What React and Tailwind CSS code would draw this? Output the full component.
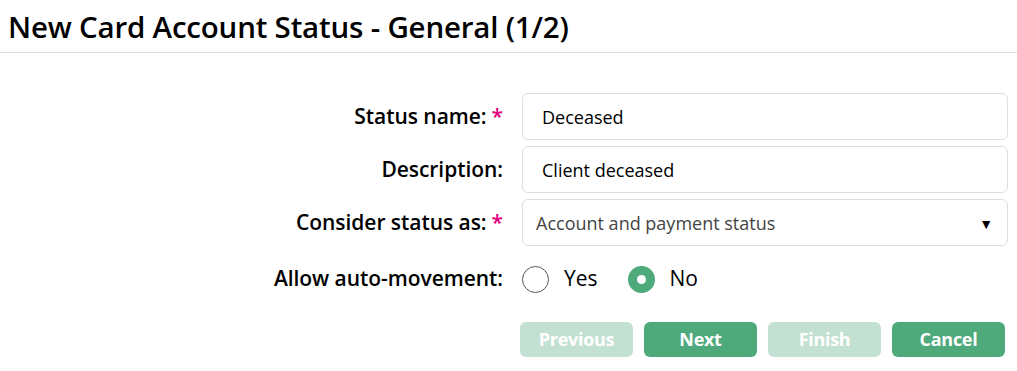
import React from 'react';

const font = { fontFamily: '"Open Sans", Lato, sans-serif' };

function Label({ children, required }) {
    return (
        <label className="flex items-center justify-end pr-[9px] text-[21px] font-semibold tracking-[-0.05px] text-black">
            {children}
            {required && <span className="ml-[5px] text-[#e5007d]">*</span>}
        </label>
    );
}

function Btn({ children, disabled }) {
    return (
        <button
            className={
                disabled
                    ? 'h-[35px] w-[113px] rounded-md bg-[#c3e1d3] text-[18px] font-bold tracking-[-0.3px] text-white'
                    : 'h-[35px] w-[113px] rounded-md bg-[#4ea97b] text-[18px] font-bold tracking-[-0.3px] text-white'
            }
        >
            {children}
        </button>
    );
}

export default function App() {
    return (
        <div className="h-[371px] w-[1017px] bg-white" style={font}>
            <div className="border-b border-[#dddddd] px-2 pt-[9px] pb-[8px]">
                <h1 className="text-[29.5px] font-semibold leading-[35px] tracking-[-0.2px] text-black">
                    New Card Account Status - General (1/2)
                </h1>
            </div>
            <div className="grid grid-cols-[512px_486px] gap-x-[10px] gap-y-[6px] pt-[40px]">
                <Label required>Status name:</Label>
                <div className="flex h-[47px] items-center rounded-md border border-[#dedede] px-[19px] pt-[2px] text-[18px] text-black">
                    Deceased
                </div>
                <Label>Description:</Label>
                <div className="flex h-[47px] items-center rounded-md border border-[#dedede] px-[19px] pt-[2px] text-[18px] text-black">
                    Client deceased
                </div>
                <Label required>Consider status as:</Label>
                <div className="flex h-[47px] items-center justify-between rounded-md border border-[#dedede] pl-[13px] pr-[14px] pt-[2px] text-[18px] text-[#444]">
                    <span>Account and payment status</span>
                    <span className="text-[14px] text-black">▼</span>
                </div>
                <Label>Allow auto-movement:</Label>
                <div className="flex h-[54px] items-center gap-[15px] text-[21px] text-black">
                    <span className="h-[27px] w-[27px] rounded-full border border-[#555]" />
                    <span className="mr-[15px]">Yes</span>
                    <span className="flex h-[27px] w-[27px] items-center justify-center rounded-full bg-[#4ea97b]">
                        <span className="h-[9px] w-[9px] rounded-full bg-white" />
                    </span>
                    <span>No</span>
                </div>
            </div>
            <div className="flex justify-end gap-[11px] pr-[12px] pt-[16px]">
                <Btn disabled>Previous</Btn>
                <Btn>Next</Btn>
                <Btn disabled>Finish</Btn>
                <Btn>Cancel</Btn>
            </div>
        </div>
    );
}
